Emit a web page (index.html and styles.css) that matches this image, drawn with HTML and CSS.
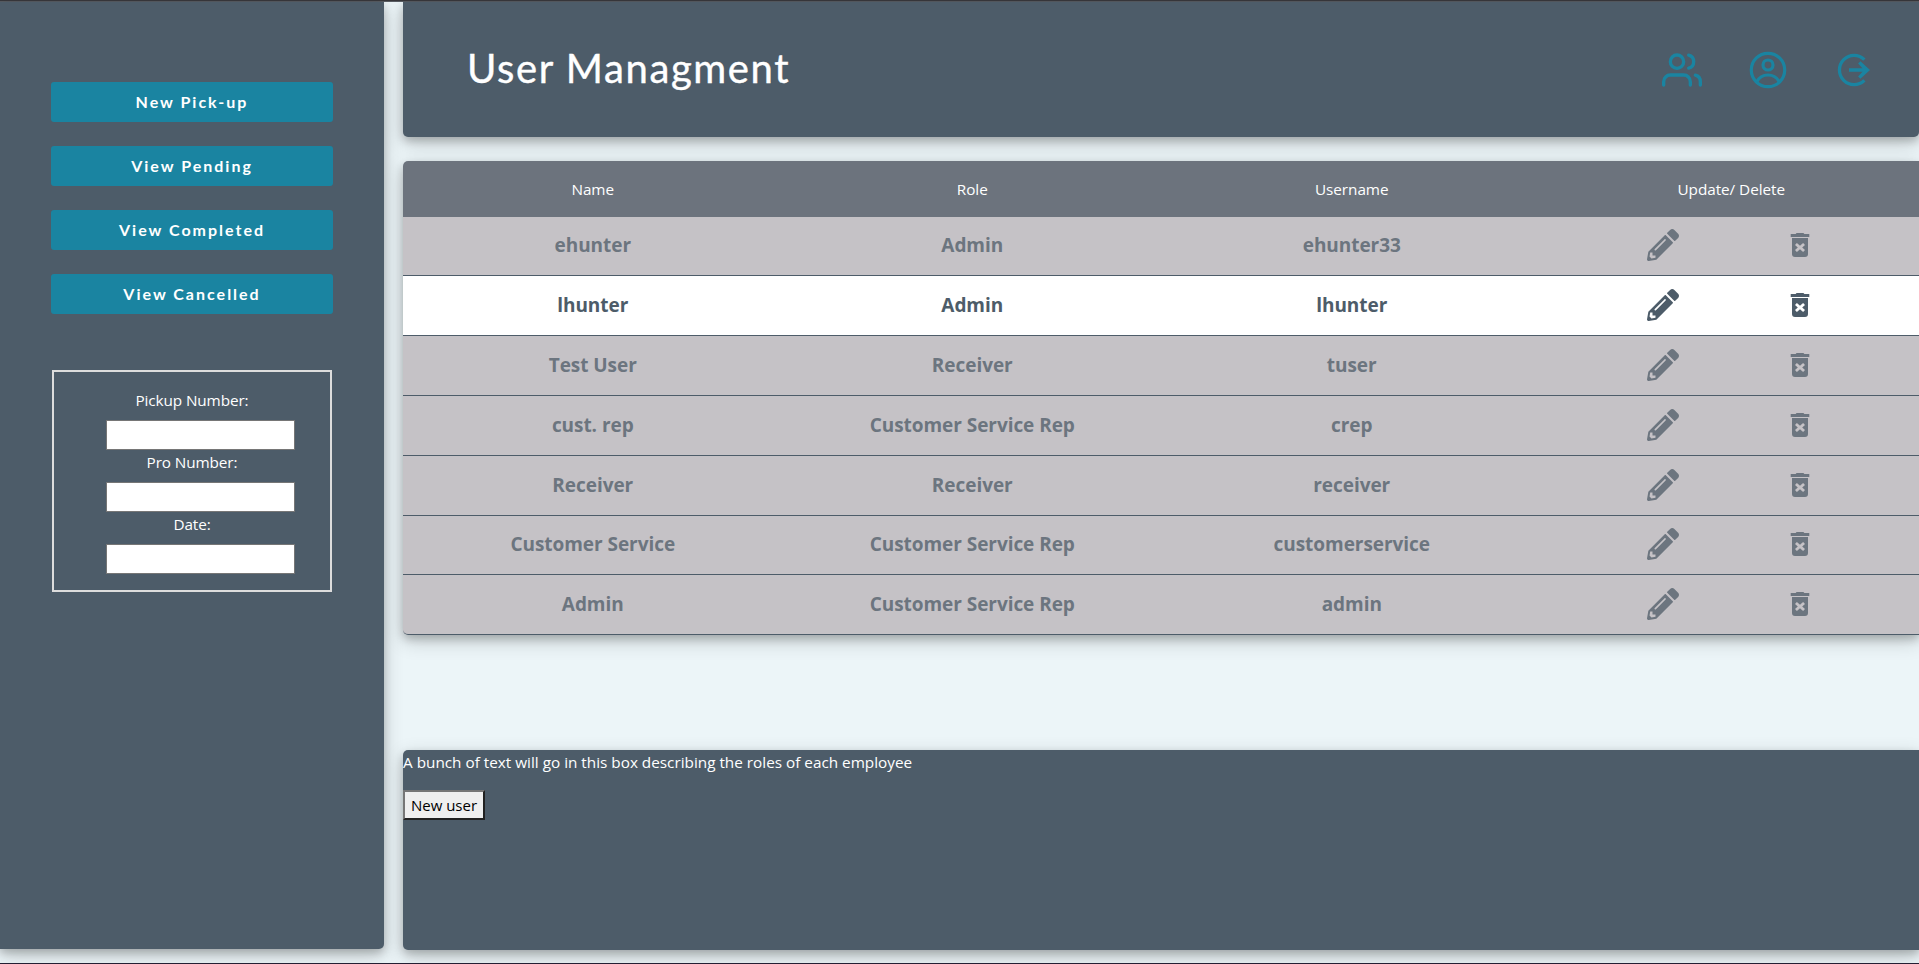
FILE: index.html
```
<!DOCTYPE html>
<html lang="en">
<head>
<meta charset="utf-8">
<title>User Managment</title>
<link rel="stylesheet" href="styles.css">
</head>
<body>
<svg class="sprite" aria-hidden="true">
  <symbol id="pencil" viewBox="0 0 512 512"><path d="M497.9 142.1l-46.1 46.1c-4.7 4.7-12.3 4.7-17 0l-111-111c-4.7-4.7-4.7-12.3 0-17l46.1-46.1c18.7-18.7 49.1-18.7 67.9 0l60.1 60.1c18.8 18.7 18.8 49.1 0 67.9zM284.2 99.8L21.6 362.4.4 483.9c-2.9 16.4 11.4 30.6 27.8 27.8l121.5-21.3 262.6-262.6c4.7-4.7 4.7-12.3 0-17l-111-111c-4.8-4.7-12.4-4.7-17.1 0zM124.1 339.9c-5.5-5.5-5.5-14.3 0-19.8l154-154c5.5-5.5 14.3-5.5 19.8 0s5.5 14.3 0 19.8l-154 154c-5.5 5.5-14.3 5.5-19.8 0zM88 424h48v36.3l-64.5 11.3-31.1-31.1L51.7 376H88v48z"/></symbol>
  <symbol id="trash" viewBox="0 0 32 32"><path d="M11.6 5L12.6 4h6.8l1 1h4.9v3H6.7V5zM8 9h16v16a3 3 0 0 1-3 3H11a3 3 0 0 1-3-3zM12.9 14l-1.9 1.9 2.8 2.6-2.8 2.6 1.9 1.9 3.1-2.7 3.1 2.7 1.9-1.9-2.8-2.6 2.8-2.6-1.9-1.9-3.1 2.7z"/></symbol>
</svg>
<div class="page">
  <aside class="sidebar">
    <nav class="menu">
      <a class="menu-btn">New Pick-up</a>
      <a class="menu-btn">View Pending</a>
      <a class="menu-btn">View Completed</a>
      <a class="menu-btn">View Cancelled</a>
    </nav>
    <form class="search">
      <label for="pickup">Pickup Number:</label><input id="pickup" type="text">
      <label for="pro">Pro Number:</label><input id="pro" type="text">
      <label for="date">Date:</label><input id="date" type="text">
    </form>
  </aside>
  <main class="main">
    <header class="header">
      <h1 class="title">User Managment</h1>
      <div class="header-icons">
        <svg viewBox="0 0 24 24" stroke-width="2" stroke-linecap="round" stroke-linejoin="round"><path d="M17 21v-2a4 4 0 0 0-4-4H5a4 4 0 0 0-4 4v2"/><circle cx="9" cy="7" r="4"/><path d="M23 21v-2a4 4 0 0 0-3-3.87M16 3.13a4 4 0 0 1 0 7.75"/></svg>
        <svg viewBox="0 0 40 40" stroke-width="3.2"><circle cx="20" cy="20" r="16.7"/><circle cx="20" cy="15" r="5"/><path d="M8.8 31.8C11 27.5 15.5 25 20 25s9 2.5 11.200 6.800"/></svg>
        <svg viewBox="0 0 40 40" stroke-width="3.3"><path d="M30.400 9.700a14.600 14.600 0 1 0 0 20.600"/><path class="solid" d="M15 18.200h13.500l-4.400-4.600 2.300-2.300 9.600 8.700-9.600 8.700-2.300-2.300 4.400-4.600H15z"/></svg>
      </div>
    </header>
    <section class="users">
      <div class="row head"><span>Name</span><span>Role</span><span>Username</span><span>Update/ Delete</span></div>
      <div class="row"><span>ehunter</span><span>Admin</span><span>ehunter33</span><span class="actions"><svg><use href="#pencil"/></svg><svg><use href="#trash"/></svg></span></div>
      <div class="row active"><span>lhunter</span><span>Admin</span><span>lhunter</span><span class="actions"><svg><use href="#pencil"/></svg><svg><use href="#trash"/></svg></span></div>
      <div class="row"><span>Test User</span><span>Receiver</span><span>tuser</span><span class="actions"><svg><use href="#pencil"/></svg><svg><use href="#trash"/></svg></span></div>
      <div class="row"><span>cust. rep</span><span>Customer Service Rep</span><span>crep</span><span class="actions"><svg><use href="#pencil"/></svg><svg><use href="#trash"/></svg></span></div>
      <div class="row"><span>Receiver</span><span>Receiver</span><span>receiver</span><span class="actions"><svg><use href="#pencil"/></svg><svg><use href="#trash"/></svg></span></div>
      <div class="row"><span>Customer Service</span><span>Customer Service Rep</span><span>customerservice</span><span class="actions"><svg><use href="#pencil"/></svg><svg><use href="#trash"/></svg></span></div>
      <div class="row"><span>Admin</span><span>Customer Service Rep</span><span>admin</span><span class="actions"><svg><use href="#pencil"/></svg><svg><use href="#trash"/></svg></span></div>
    </section>
    <section class="info">
      <p>A bunch of text will go in this box describing the roles of each employee</p>
      <button type="button" class="new-user">New user</button>
    </section>
  </main>
</div>
</body>
</html>
```

FILE: styles.css
```
* { box-sizing: border-box; }

body {
  margin: 0;
  height: 964px;
  overflow: hidden;
  background: #ecf5f8;
  border-top: 1px solid #363539;
  border-bottom: 1px solid #241f33;
  font: 15.3px/24px "Open Sans", "Noto Sans", sans-serif;
  color: #fff;
}

.sprite { display: none; }

.page {
  display: flex;
  gap: 19px;
  height: 962px;
  border-top: 1px solid #5a5e64;
}

.sidebar, .header, .users, .info {
  box-shadow: 0 4px 8px rgba(0, 0, 0, .2), 0 6px 20px rgba(0, 0, 0, .19);
}

.sidebar {
  flex: none;
  width: 384px;
  height: 947px;
  padding: 80px 51px 0;
  background: #4d5c69;
  border-radius: 0 0 5px 0;
}

.menu { display: grid; gap: 24px; }

.menu-btn {
  height: 40px;
  background: #1a84a1;
  border-radius: 3px;
  font: bold 16px/40px Lato, sans-serif;
  letter-spacing: 2px;
  text-align: center;
}

.search {
  display: flex;
  flex-direction: column;
  align-items: center;
  width: 280px;
  margin: 56px 0 0 1px;
  padding: 16px;
  border: 2px solid #ddd;
}

.search label { letter-spacing: -.1px; }

.search input {
  width: 189px;
  height: 30px;
  margin: 8px 0 0 17px;
  background: #fff;
  border: 1px solid #767676;
}

.main { flex: 1; min-width: 0; }

.header {
  display: flex;
  align-items: center;
  justify-content: space-between;
  height: 135px;
  padding: 0 45px 0 64px;
  background: #4d5c69;
  border-radius: 0 0 5px 5px;
}

.title {
  margin: 0;
  padding-bottom: 3px;
  font: 400 40px/48px Lato, sans-serif;
  letter-spacing: 1.6px;
  -webkit-text-stroke: .4px #fff;
}

.header-icons { display: flex; gap: 46px; }

.header-icons svg {
  width: 40px;
  height: 40px;
  fill: none;
  stroke: #1a84a1;
}

.header-icons .solid { fill: #1a84a1; stroke: none; }

.users {
  margin-top: 24px;
  border-radius: 5px 0 0 5px;
}

.row {
  display: grid;
  grid-template-columns: repeat(4, 1fr);
  align-items: center;
  width: 1518px;
  max-width: none;
  height: 60px;
  padding-bottom: 2px;
  background: #c5c2c6;
  border-bottom: 1px solid #4d5c69;
  color: #6c757f;
  font-size: 19px;
  font-weight: bold;
  letter-spacing: -.05px;
  text-align: center;
}

.row:nth-child(2), .row:nth-child(7) { height: 59px; }

.row:last-child { border-bottom-left-radius: 5px; }

.row.head {
  height: 56px;
  padding: 0;
  background: #6c737d;
  border: 0;
  border-top-left-radius: 5px;
  color: #fff;
  font-size: 15.3px;
  font-weight: 400;
}

.row.active { background: #fff; color: #4d5c69; }

.actions { display: flex; justify-content: center; gap: 105px; }

.actions svg { width: 32px; height: 32px; fill: currentColor; }

.info {
  height: 200px;
  margin-top: 115px;
  background: #4d5c69;
  border-radius: 5px 0 0 5px;
}

.info p { margin: 0 0 16px; }

.new-user {
  display: block;
  width: 82px;
  height: 30px;
  padding: 0;
  border: 2px outset #767676;
  background: #efefef;
  color: #000;
  font: 15px/24px "Open Sans", sans-serif;
}
```
